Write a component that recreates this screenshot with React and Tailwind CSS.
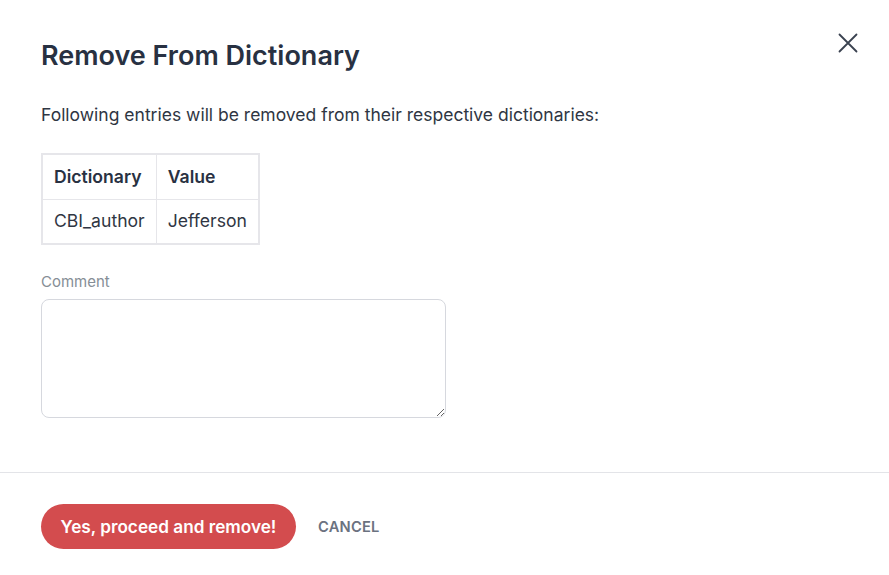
import React from 'react';

const App = () => {
  return (
    <div className="w-[889px] h-[575px] bg-white font-['Inter','Liberation_Sans',sans-serif] text-[#283142] overflow-hidden">
      {/* Header */}
      <div className="flex items-start justify-between pl-[41px] pr-[31px] pt-[38px]">
        <h1 className="text-[27px] leading-[36px] font-semibold text-[#283142]">Remove From Dictionary</h1>
        <button type="button" className="mt-[-5px] text-[#3a4250]">
          <svg width="20" height="20" viewBox="0 0 20 20" fill="none" stroke="currentColor" strokeWidth="1.8" strokeLinecap="round">
            <path d="M1.5 1.5L18.5 18.5M18.5 1.5L1.5 18.5" />
          </svg>
        </button>
      </div>

      {/* Body */}
      <div className="px-[41px] pt-[29px]">
        <p className="text-[17.5px] leading-[24px] text-[#2f3643]">
          Following entries will be removed from their respective dictionaries:
        </p>

        <table className="mt-[26px] border-collapse border-2 border-[#e6e6ea] text-[17.6px]">
          <thead>
            <tr>
              <th className="h-[45px] w-[114px] px-[11px] text-left font-semibold border border-[#e6e6ea]">Dictionary</th>
              <th className="h-[45px] w-[101px] px-[11px] text-left font-semibold border border-[#e6e6ea]">Value</th>
            </tr>
          </thead>
          <tbody>
            <tr>
              <td className="h-[45px] px-[11px] text-[#2f3643] border border-[#e6e6ea]">CBI_author</td>
              <td className="h-[45px] px-[11px] text-[#2f3643] border border-[#e6e6ea]">Jefferson</td>
            </tr>
          </tbody>
        </table>

        <label className="block mt-[27px] text-[15px] leading-[20px] text-[#868e96]">Comment</label>
        <textarea className="block mt-[7px] w-[405px] h-[119px] rounded-[8px] border border-[#d6d8de] outline-none"></textarea>
      </div>

      {/* Footer */}
      <div className="mt-[54px] border-t border-[#e3e4e8]">
        <div className="flex items-center gap-[22px] pl-[41px] pt-[31px]">
          <button
            type="button"
            className="h-[45px] w-[255px] rounded-full bg-[#d34c4e] text-white text-[17.2px] font-semibold"
          >
            Yes, proceed and remove!
          </button>
          <button type="button" className="mt-[1px] text-[14.7px] font-semibold text-[#6b7280] tracking-[0.2px]">
            CANCEL
          </button>
        </div>
      </div>
    </div>
  );
};

export default App;
